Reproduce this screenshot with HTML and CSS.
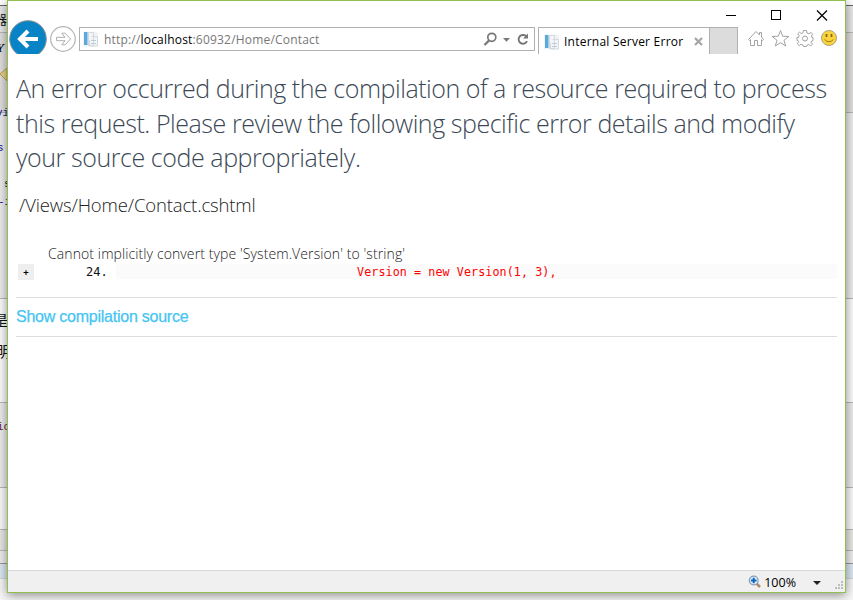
FILE: index.html
```html
<!DOCTYPE html>
<html lang="en">
<head>
<meta charset="utf-8">
<title>Internal Server Error</title>
<link rel="stylesheet" href="styles.css">
</head>
<body>
<div class="desktop">
  <div class="band b1"></div><div class="band b2"></div><div class="band b3"></div><div class="band b4"></div>
  <div class="band b5"></div><div class="band b6"></div><div class="band b7"></div><div class="band b8"></div>
  <div class="band b9"></div><div class="band b10"></div><div class="band b11"></div>
  <span class="frag cjk f1">器</span>
  <span class="frag f2">Y</span>
  <svg class="frag f3" width="8" height="14" viewBox="0 0 8 14"><path d="M0 6 7 0V13Z" fill="#ead48a" stroke="#b99d52"/></svg>
  <span class="frag code f4">s</span>
  <span class="frag code f5">s</span>
  <span class="frag code f6">-i</span>
  <span class="frag cjk f7">是</span>
  <span class="frag cjk f8">明</span>
  <span class="frag code f9">ic</span>
  <span class="frag code f10">vi</span>
</div>
<main class="window">
  <header class="chrome">
    <svg class="nav" width="71" height="54" viewBox="8 0 71 54">
      <circle cx="28" cy="39" r="18.3" fill="#0783c6" stroke="#888f94" stroke-width="1"/>
      <path d="M38 39H20M28 31 20 39 28 47" fill="none" stroke="#fff" stroke-width="4"/>
      <circle cx="63" cy="39" r="12.3" fill="#fff" stroke="#b5b5b5" stroke-width="1.2"/>
      <path d="M56.500 37.300H65L61.800 33.200H65.200L70.500 39 65.200 44.800H61.800L65 40.700H56.500Z" fill="none" stroke="#b0b0b0"/>
    </svg>
    <div class="address">
      <svg class="page-icon" width="16" height="16" viewBox="0 0 16 16"><path d="M0 .5H15V15.5H0Z" fill="#f1f4f7"/><path d="M1 1H4.500V14H1Z" fill="#5ba9da"/><path d="M5.500 1.500H10.500V14.500H5.500ZM8.500 5.500H14.500V15H6.500V9" fill="#f3f5f7" stroke="#d3d9de"/><path d="M8 9.500H13M8 12.500H13" stroke="#bccbd9"/></svg>
      <span class="url">http://<b>localhost</b>:60932/Home/Contact</span>
      <svg class="tools" width="50" height="22" viewBox="482 28 50 22" fill="none" stroke="#777">
        <circle cx="491.8" cy="37.3" r="4" stroke-width="1.7"/><path d="M489 40.5 484.5 45" stroke-width="2.3"/>
        <path d="M503 38H510L506.500 41.700Z" fill="#777" stroke="none"/>
        <path d="M526.800 37.100A4.400 4.400 0 1 0 527 41.200" stroke-width="1.900"/><path d="M528 33.500V38.500H523Z" fill="#777" stroke="none"/>
      </svg>
    </div>
    <div class="tab">
      <svg class="page-icon" width="16" height="16" viewBox="0 0 16 16"><path d="M0 .5H15V15.5H0Z" fill="#f1f4f7"/><path d="M1 1H4.500V14H1Z" fill="#5ba9da"/><path d="M5.500 1.500H10.500V14.500H5.500ZM8.500 5.500H14.500V15H6.500V9" fill="#f3f5f7" stroke="#d3d9de"/><path d="M8 9.500H13M8 12.500H13" stroke="#bccbd9"/></svg>
      <span class="tab-title">Internal Server Error</span>
      <svg class="tab-x" width="9" height="9" viewBox="0 0 9 9"><path d="M1 1 8 8M8 1 1 8" stroke="#a5a5a5" stroke-width="2.2"/></svg>
    </div>
    <div class="new-tab"></div>
    <svg class="controls" width="107" height="54" viewBox="738 0 107 54" fill="none">
      <path d="M771.500 10.500H780.500V19.500H771.500Z" stroke="#000" shape-rendering="crispEdges"/>
      <path d="M817 10.500 827 20.500M827 10.500 817 20.500" stroke="#000" stroke-width="1.200"/>
      <path d="M748.500 39.500 756 31.500 759.500 35V32.500H761.500V37L763.500 39.500 762.500 40.500 761.500 39.700V45.500H757.500V40.500H754.500V45.500H750.500V39.700L749.500 40.500Z" stroke="#a2a2a2"/>
      <path d="M780.500 30.500 782.700 36.200 788.800 36.500 784 40.300 785.700 46 780.500 42.700 775.300 46 777 40.300 772.200 36.500 778.300 36.200Z" stroke="#a2a2a2"/>
      <path d="M803.500 30.500H806.500L807 33 809 33.800 811 32.400 812.700 34.100 811.300 36 812 37.500H813V40.500L811.500 41 811 42.500 812.500 44 810.500 46 808.700 44.500 807 45.200 806.500 46.500H803.500L803 45 801 44.300 799.200 45.500 797.300 43.700 798.700 41.700 798 40.500H797V37.500H798.500L799.200 35.500 797.700 33.800 799.500 32.200 801.300 33.500 803 32.800Z" stroke="#a2a2a2"/>
      <circle cx="805" cy="38.500" r="2.500" stroke="#a2a2a2"/>
      <circle cx="829" cy="38" r="7.500" fill="#fbd43b" stroke="#aaa27c"/><path d="M826.500 34V37M831.500 34V37" stroke="#80651c" stroke-width="1.700"/><path d="M824.500 39.500Q829 44 833.500 39.500" stroke="#9a7c22"/>
    </svg>
    <svg class="minimize" width="12" height="3" viewBox="0 0 12 3"><path d="M1 1.500H11" stroke="#000"/></svg>
  </header>
  <section class="page">
    <h1><span class="l1">An error occurred during the compilation of a resource required to process</span><span class="l2">this request. Please review the following specific error details and modify</span><span class="l3">your source code appropriately.</span></h1>
    <h2>/Views/Home/Contact.cshtml</h2>
    <div class="message">Cannot implicitly convert type 'System.Version' to 'string'</div>
    <div class="source"><button class="expand">+</button><span class="line-no">24.</span><code>Version = new Version(1, 3),</code></div>
    <div class="compile"><a>Show compilation source</a></div>
  </section>
  <footer class="status">
    <svg class="zoom-icon" width="14" height="14" viewBox="0 0 14 14"><path d="M8.500 8.500 12 12" stroke="#b38867" stroke-width="2.500"/><circle cx="5.700" cy="5.500" r="4.400" fill="#e4f2fc" stroke="#829eb8" stroke-width="1.200"/><path d="M5.700 2.700V8.300M2.900 5.500H8.500" stroke="#0b63bd" stroke-width="2"/></svg>
    <span class="percent">100%</span>
    <svg class="arrow" width="8" height="4" viewBox="0 0 8 4"><path d="M0 0H8L4 4Z" fill="#222"/></svg>
    <svg class="grip" width="8" height="8" viewBox="0 0 8 8" fill="#bdbdbd"><path d="M6 0h2v2H6zM3 3h2v2H3zM6 3h2v2H6zM0 6h2v2H0zM3 6h2v2H3zM6 6h2v2H6z"/></svg>
  </footer>
</main>
</body>
</html>
```

FILE: styles.css
```css
* { box-sizing: border-box; }
body { margin: 0; width: 853px; height: 600px; overflow: hidden; background: #f4f4f4; font-family: "Open Sans", sans-serif; position: relative; }
.desktop { position: absolute; inset: 0; display: flex; flex-direction: column; overflow: hidden; }
.band { flex: none; border-bottom: 1px solid #b7b7b7; background: #f1f1f1; }
.b1 { height: 6px; border-color: #666; background: #fff; }
.b2 { height: 27px; background: #e8e8e8; }
.b3 { height: 80px; background: #e0dfdd; }
.b4 { height: 186px; background: #ededed; }
.b5 { height: 104px; background: #fbfbfb; }
.b6 { height: 85px; background: #ececec; }
.b7 { height: 42px; background: #fafafa; }
.b8 { height: 21px; background: #e7e7e4; }
.b9 { height: 13px; background: #ededed; border-color: #999; }
.b10 { height: 15px; background: #dce6f2; border-color: #d5d5d5; }
.b11 { flex: 1; background: #f7f7f7; border: 0; }
.frag { position: absolute; white-space: nowrap; line-height: 1; }
.cjk { font-family: "Noto Sans CJK SC", sans-serif; font-size: 15px; color: #111; }
.code { font: 11px/1 "Liberation Mono", monospace; color: #15158b; }
.f1 { left: -6px; top: 12px; font-size: 13px; }
.f2 { left: -4px; top: 41px; font: italic bold 13px/1 "Liberation Serif", serif; }
.f3 { left: 0; top: 68px; }
.f4 { left: -3px; top: 143px; }
.f5 { left: 4px; top: 179px; color: #222; }
.f6 { left: -2px; top: 197px; }
.f7 { left: -7px; top: 312px; }
.f8 { left: -4px; top: 343px; }
.f9 { left: -3px; top: 422px; color: #6b2345; }
.f10 { left: -4px; top: 108px; }
.window { position: relative; margin-left: 7px; width: 839px; height: 593px; border: 1px solid #92c050; background: #fff; box-shadow: 0 2px 10px rgba(0,0,0,.45); display: flex; flex-direction: column; }
.chrome { height: 53px; display: flex; align-items: flex-end; position: relative; flex: none; }
.nav, .controls { display: block; flex: none; }
.address { width: 456px; height: 24px; margin-bottom: 3px; border: 1px solid #b1b1b1; display: flex; align-items: center; padding-left: 3px; flex: none; }
.page-icon { flex: none; }
.url { font: 12px/22px "Open Sans", sans-serif; letter-spacing: .19px; color: #777; margin-left: 5px; padding-top: 2px; flex: 1; white-space: nowrap; }
.url b { font-weight: 400; color: #000; }
.tools { flex: none; margin-right: 2px; }
.tab { margin-left: 3px; width: 171px; height: 27px; border: 1px solid #b1b1b1; border-width: 1px 0 0 1px; display: flex; align-items: center; padding: 1px 6px 0 5px; flex: none; }
.tab-title { font-size: 12px; letter-spacing: .24px; color: #000; margin-left: 4px; flex: 1; white-space: nowrap; }
.tab-x { flex: none; }
.new-tab { width: 29px; height: 27px; background: #dcdcdc; border: 1px solid #b1b1b1; border-bottom: 0; flex: none; }
.minimize { position: absolute; left: 717px; top: 13px; }
.page { padding: 17px 8px 0; flex: 1; }
h1 { margin: 0; font-weight: 300; font-size: 25px; line-height: 34.500px; color: #3b4956; }
h1 span { display: block; white-space: nowrap; }
.l1 { letter-spacing: -.46px; }
.l2 { letter-spacing: -.45px; }
.l3 { letter-spacing: -.43px; }
h2 { margin: 17px 0 0 3px; font-weight: 300; font-size: 18.500px; letter-spacing: -.14px; line-height: 26px; color: #222; }
.message { margin: 26px 0 0 32px; font-weight: 300; font-size: 14px; letter-spacing: .1px; line-height: 20px; color: #222; white-space: nowrap; }
.source { display: flex; align-items: center; height: 16px; font: 12px/16px "DejaVu Sans Mono", monospace; }
.expand { width: 16px; height: 16px; margin-left: 2px; border: 0; padding: 0; background: #eee; color: #000; font: bold 9px/16px "DejaVu Sans Mono", monospace; }
.line-no { width: 82px; padding-left: 52px; color: #111; }
.source code { flex: 1; height: 15px; line-height: 16px; padding-left: 241px; background: #fbfbfb; color: #f00; font-family: inherit; font-size: 11.700px; letter-spacing: .09px; white-space: nowrap; }
.compile { margin-top: 17px; height: 40px; border: 1px solid #ddd; border-width: 1px 0; font: 16px/38px "Liberation Sans", sans-serif; letter-spacing: -.24px; color: #44c5f2; -webkit-text-stroke: .25px #44c5f2; }
.status { height: 22px; border-top: 1px solid #d7d7d7; background: #f0f0f0; display: flex; align-items: center; justify-content: flex-end; flex: none; }
.percent { font: 12.500px/20px "Open Sans", sans-serif; color: #000; margin: 2px 17px 0 2px; }
.arrow { margin: 3px 14px 0 0; }
.grip { align-self: flex-end; margin: 0 2px 3px 0; }
```
